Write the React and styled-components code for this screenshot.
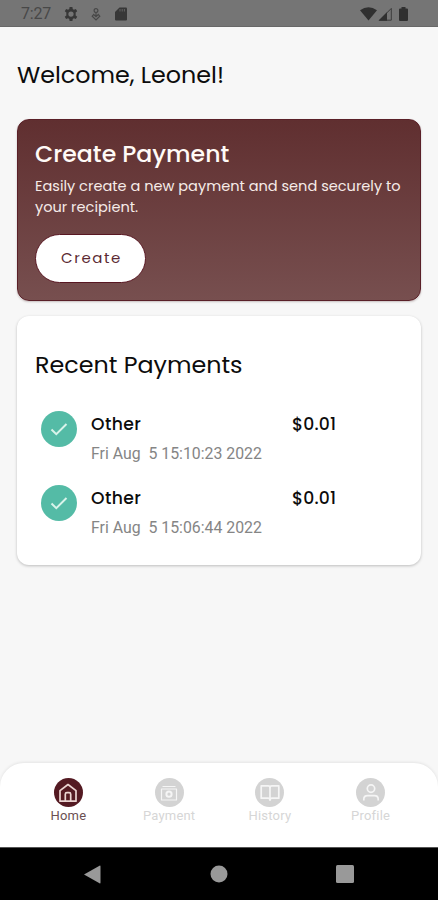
import React, {useState} from 'react';
import styled, {createGlobalStyle} from 'styled-components';

const GlobalStyle = createGlobalStyle`
    body{
        margin: 0;
        background: #f7f7f7;
    }
    *{
        box-sizing: border-box;
    }
`;

const Screen = styled.div`
    display: flex;
    flex-direction: column;
    width: 438px;
    height: 900px;
    overflow: hidden;
    background: #f7f7f7;
    font-family: 'Poppins', 'Inter', sans-serif;
    color: #0c0c0c;
`;

const StatusBar = styled.div`
    display: flex;
    align-items: center;
    flex: none;
    height: 27px;
    padding: 2px 30px 0 21px;
    background: #757575;
    border-bottom: 1px solid #686868;
    color: #373737;
`;

const Clock = styled.span`
    width: 43px;
    font-family: 'Roboto', sans-serif;
    font-size: 16px;
    line-height: 20px;
    letter-spacing: -0.2px;
    color: #484848;
`;

const StatusIcon = styled.svg`
    display: block;
    flex: none;
    width: ${({$w}) => $w}px;
    height: ${({$h}) => $h || 14}px;
    margin-left: ${({$gap}) => $gap || 0}px;
`;

const StatusSpacer = styled.div`
    flex: 1;
`;

const Content = styled.main`
    display: flex;
    flex-direction: column;
    flex: 1;
    padding: 32px 17px 0;
`;

const Welcome = styled.h1`
    margin: 0 0 28px;
    font-size: 23.8px;
    font-weight: 400;
    line-height: 32px;
    white-space: nowrap;
`;

const CreateCard = styled.section`
    display: flex;
    flex-direction: column;
    align-items: flex-start;
    flex: none;
    height: 182px;
    padding: 18px 12px 0 17px;
    border: 1px solid #5a2028;
    border-radius: 12px;
    background: linear-gradient(#602f30, #774f4f);
    box-shadow: 0 1px 2px rgba(60, 30, 30, 0.25);
    color: #fffaf6;
`;

const CreateTitle = styled.h2`
    margin: 0;
    font-size: 23.6px;
    font-weight: 500;
    line-height: 32px;
`;

const CreateText = styled.p`
    margin: 6px 0 17px;
    font-size: 14.55px;
    line-height: 20.5px;
    white-space: pre-line;
    color: #f6ebe8;
`;

const CreateButton = styled.button`
    width: 111px;
    height: 49px;
    padding: 0 0 3px 2px;
    border: 1px solid #581722;
    border-radius: 25px;
    background: #fff;
    font-family: inherit;
    font-size: 15px;
    letter-spacing: 1.6px;
    color: #5c2a33;
    cursor: pointer;
    outline: none;
`;

const RecentCard = styled.section`
    flex: none;
    height: 249px;
    margin-top: 15px;
    padding: 32px 18px 0 18px;
    border-radius: 12px;
    background: #fff;
    box-shadow: 0 1px 3px rgba(0, 0, 0, 0.24);
`;

const RecentTitle = styled.h2`
    margin: 0 0 30px;
    font-size: 23.8px;
    font-weight: 400;
    line-height: 33px;
`;

const PaymentRow = styled.div`
    display: grid;
    grid-template-columns: 50px 201px 1fr;
    height: 74px;
    padding-left: 6px;
`;

const CheckCircle = styled.div`
    display: flex;
    align-items: center;
    justify-content: center;
    width: 36px;
    height: 36px;
    margin-left: -0.5px;
    border-radius: 50%;
    background: #54bba6;
`;

const PaymentName = styled.div`
    font-size: 17.2px;
    font-weight: 500;
    line-height: 27px;
    letter-spacing: ${({$spacing}) => $spacing || 0}px;
`;

const PaymentDate = styled.div`
    margin-top: 2px;
    font-family: 'Roboto', sans-serif;
    font-size: 15.85px;
    line-height: 28px;
    white-space: pre;
    color: #858585;
`;

const TabBar = styled.nav`
    display: grid;
    grid-template-columns: repeat(4, 1fr);
    flex: none;
    height: 84px;
    padding: 15px 17px 0 18px;
    border-radius: 24px 24px 0 0;
    background: #fff;
    box-shadow: 0 -1px 3px rgba(0, 0, 0, 0.08);
`;

const Tab = styled.button`
    display: flex;
    flex-direction: column;
    align-items: center;
    height: 50px;
    padding: 0;
    border: none;
    background: none;
    font-family: 'Roboto', sans-serif;
    font-size: 13px;
    line-height: 17px;
    letter-spacing: 0.2px;
    color: ${({$active}) => ($active ? '#6b4f52' : '#d6d6d6')};
    cursor: pointer;
    outline: none;
`;

const TabCircle = styled.span`
    display: flex;
    align-items: center;
    justify-content: center;
    flex: none;
    width: 29px;
    height: 29px;
    border-radius: 50%;
    background: ${({$active}) => ($active ? '#541a22' : '#d3d3d3')};
    color: ${({$active}) => ($active ? '#ecd5d2' : '#f5f5f5')};
`;

const SystemBar = styled.div`
    display: flex;
    align-items: center;
    justify-content: space-between;
    flex: none;
    height: 53px;
    padding: 0 84px 0 83px;
    background: #000;
    border-top: 1px solid #555;
    color: #999;
`;

const payments = [
    {id: 1, name: 'Other', amount: '$0.01', date: 'Fri Aug  5 15:10:23 2022'},
    {id: 2, name: 'Other', amount: '$0.01', date: 'Fri Aug  5 15:06:44 2022'},
];

const tabs = [
    {
        label: 'Home',
        icon: (
            <>
                <path d="M2 7.6 10 1.5 18 7.6V18.2H2z" />
                <path d="M7.3 18V11.2Q7.3 9.6 8.9 9.6H11.1Q12.7 9.6 12.7 11.2V18" />
            </>
        ),
    },
    {
        label: 'Payment',
        icon: (
            <>
                <path d="M2.500 6H17.500V17H2.500z" strokeWidth="1.200" />
                <path d="M3.500 3.500H16.500" strokeWidth="1" />
                <circle cx="10" cy="11.200" r="2.600" strokeWidth="2" />
            </>
        ),
    },
    {
        label: 'History',
        icon: (
            <>
                <path d="M1.200 2.800H8.200Q10 2.800 10 4.400Q10 2.800 11.800 2.800H18.800V15.200H12Q10 15.200 10 17Q10 15.200 8 15.200H1.200z" />
                <path d="M10 4V17.500" />
            </>
        ),
    },
    {
        label: 'Profile',
        icon: (
            <>
                <circle cx="10" cy="5.600" r="3.700" />
                <path d="M2.800 17.600V16.200Q2.800 12.600 6.600 12.600H13.400Q17.200 12.600 17.200 16.200V17.600" />
            </>
        ),
    },
];

const StatusIcons = () => (
    <StatusBar>
        <Clock>7:27</Clock>
        <StatusIcon $w={14} viewBox="0 0 24 24">
            <path
                fill="currentColor"
                fillRule="evenodd"
                d="M9.6 0h4.8l.6 3.4 2 1.2 3.3-1.3L22.7 7.400 20 9.600v4.800l2.700 2.200-2.400 4.100-3.300-1.300-2 1.200-.6 3.400H9.600L9 20.600l-2-1.200-3.300 1.300-2.400-4.100L4 14.400V9.600L1.300 7.400l2.400-4.100L7 4.600l2-1.200zM12 7.500a4.500 4.500 0 1 0 0 9 4.500 4.500 0 0 0 0-9z"
            />
        </StatusIcon>
        <StatusIcon $w={10} $h={13} $gap={13} viewBox="0 0 10 13" fill="none" stroke="#484848" strokeWidth="1.2">
            <circle cx="5" cy="2.600" r="1.900" />
            <path d="M5 4.500V8M3.200 6 1.200 8.200 5 12 8.800 8.200 6.800 6M3.200 7 5 8.600 6.800 7" />
        </StatusIcon>
        <StatusIcon $w={12} $gap={14} viewBox="0 0 12 14">
            <path fill="currentColor" d="M4.500.5H11q1 0 1 1v11q0 1-1 1H1q-1 0-1-1V5z" />
            <path stroke="#686868" strokeWidth=".9" d="M5 2v2.500M7.200 2v2.500M9.400 2v2.500" />
        </StatusIcon>
        <StatusSpacer />
        <StatusIcon $w={17} viewBox="0 0 17 14">
            <path fill="#303030" d="M0 3.300Q8.500-2.800 17 3.300L8.500 13.600z" />
        </StatusIcon>
        <StatusIcon $w={14} $gap={1} viewBox="0 0 14 14">
            <path fill="none" stroke="#3c3c3c" d="M1.500 13.200 13.300 1.400V13.200z" />
            <path fill="#303030" d="M.5 13.700 9 5.200V13.700z" />
        </StatusIcon>
        <StatusIcon $w={9} $gap={7} viewBox="0 0 9 14">
            <path fill="#303030" d="M2.500 0h4v1.500H8q1 0 1 1V13q0 1-1 1H1q-1 0-1-1V2.500q0-1 1-1h1.500z" />
        </StatusIcon>
    </StatusBar>
);

const App = () => {

    const [active, setActive] = useState('Home');

    return(
        <>
        <GlobalStyle />
        <Screen>
            <StatusIcons />
            <Content>
                <Welcome>Welcome, Leonel!</Welcome>
                <CreateCard>
                    <CreateTitle>Create Payment</CreateTitle>
                    <CreateText>{'Easily create a new payment and send securely to\nyour recipient.'}</CreateText>
                    <CreateButton>Create</CreateButton>
                </CreateCard>
                <RecentCard>
                    <RecentTitle>Recent Payments</RecentTitle>
                    {
                        payments.map(payment => (
                            <PaymentRow key={payment.id}>
                                <CheckCircle>
                                    <svg width="18" height="14" viewBox="0 0 18 14" fill="none" stroke="#d9f3ea" strokeWidth="2">
                                        <path d="M1.500 7.500 6.300 12.200 16.500 2" />
                                    </svg>
                                </CheckCircle>
                                <div>
                                    <PaymentName $spacing={0.4}>{payment.name}</PaymentName>
                                    <PaymentDate>{payment.date}</PaymentDate>
                                </div>
                                <PaymentName $spacing={0.15}>{payment.amount}</PaymentName>
                            </PaymentRow>
                        ))
                    }
                </RecentCard>
            </Content>
            <TabBar>
                {
                    tabs.map(({label, icon}) => (
                        <Tab key={label} $active={active === label} onClick={() => setActive(label)}>
                            <TabCircle $active={active === label}>
                                <svg width="20" height="20" viewBox="0 0 20 20" fill="none" stroke="currentColor" strokeWidth="1.700" strokeLinejoin="round">
                                    {icon}
                                </svg>
                            </TabCircle>
                            {label}
                        </Tab>
                    ))
                }
            </TabBar>
            <SystemBar>
                <svg width="18" height="19" viewBox="0 0 18 19"><path fill="currentColor" d="M1 9.500 16.500 .7Q17.500 0 17.500 1.500V17.500Q17.500 19 16.500 18.300z" /></svg>
                <svg width="18" height="18" viewBox="0 0 18 18"><circle cx="9" cy="9" r="8.500" fill="currentColor" /></svg>
                <svg width="18" height="18" viewBox="0 0 18 18"><rect width="18" height="18" rx="1.500" fill="currentColor" /></svg>
            </SystemBar>
        </Screen>
        </>
    )
};

export default App;
